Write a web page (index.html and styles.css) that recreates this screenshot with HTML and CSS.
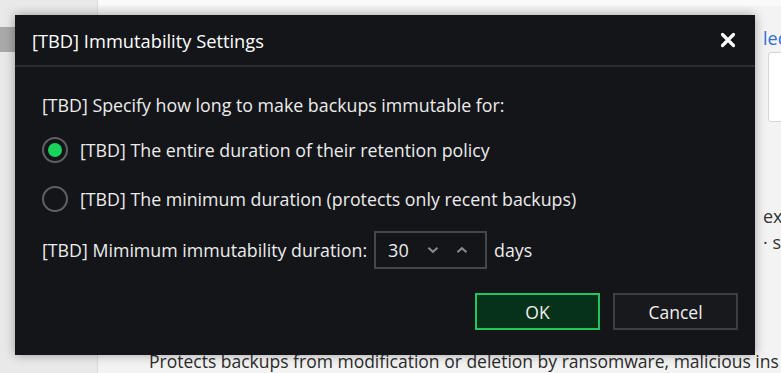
FILE: index.html
```html
<!DOCTYPE html>
<html lang="en">
<head>
    <meta charset="UTF-8">
    <title>Immutability Settings</title>
    <link rel="stylesheet" href="styles.css">
</head>
<body>
    <div class="page">
        <div class="sidebar">
            <div class="nav-item"></div>
        </div>
        <div class="main">
            <div class="main-top"></div>
            <div class="side-bits">
                <span class="link">led</span>
                <div class="field"></div>
                <span class="hint hint-1">exc</span>
                <span class="hint hint-2">· st</span>
            </div>
            <p class="desc">Protects backups from modification or deletion by ransomware, malicious ins</p>
        </div>
    </div>

    <div class="dialog">
        <div class="dialog-title">
            <span>[TBD] Immutability Settings</span>
            <svg class="close" width="16" height="16" viewBox="0 0 16 16">
                <path d="M2.5 2.5 L13.5 13.5 M13.5 2.5 L2.5 13.5" stroke="#fff" stroke-width="3.2" stroke-linecap="round"/>
            </svg>
        </div>
        <div class="dialog-body">
            <p class="intro">[TBD] Specify how long to make backups immutable for:</p>
            <label class="radio-row">
                <span class="radio checked"></span>
                <span>[TBD] The entire duration of their retention policy</span>
            </label>
            <label class="radio-row">
                <span class="radio"></span>
                <span>[TBD] The minimum duration (protects only recent backups)</span>
            </label>
            <div class="duration-row">
                <span>[TBD] Mimimum immutability duration:</span>
                <div class="spinbox">
                    <span class="spin-value">30</span>
                    <svg class="chevron" width="13" height="8" viewBox="0 0 13 8">
                        <path d="M1.5 1.5 L6.5 6 L11.5 1.5" fill="none" stroke="#8a8a8e" stroke-width="2.2"/>
                    </svg>
                    <svg class="chevron" width="13" height="8" viewBox="0 0 13 8">
                        <path d="M1.5 6.5 L6.5 2 L11.5 6.5" fill="none" stroke="#8a8a8e" stroke-width="2.2"/>
                    </svg>
                </div>
                <span>days</span>
            </div>
            <div class="actions">
                <button class="btn btn-ok">OK</button>
                <button class="btn btn-cancel">Cancel</button>
            </div>
        </div>
    </div>
</body>
</html>
```

FILE: styles.css
```css
body {
    margin: 0;
    font-family: "Open Sans", "Noto Sans", sans-serif;
    background-color: #ececec;
    overflow: hidden;
}
.page {
    display: flex;
    height: 373px;
}
.sidebar {
    width: 97px;
    background-color: #e9e9e9;
    border-right: 1px solid #dcdcdc;
    padding-top: 27px;
}
.nav-item {
    width: 16px;
    height: 25px;
    background-color: #a9a9a9;
}
.main {
    flex: 1;
    background-color: #f3f3f3;
    position: relative;
    overflow: hidden;
}
.main-top {
    height: 6px;
    background-color: #fafafa;
}
.side-bits {
    position: absolute;
    left: 662px;
    top: 0;
    width: 21px;
    height: 300px;
    overflow: hidden;
}
.link {
    position: absolute;
    top: 26px;
    left: 3px;
    color: #2f6fd6;
    font-size: 18px;
}
.field {
    position: absolute;
    top: 52px;
    left: 8px;
    width: 40px;
    height: 68px;
    background-color: #fff;
    border: 1px solid #d6d6d6;
    border-radius: 3px;
}
.hint {
    position: absolute;
    left: 3px;
    color: #333;
    font-size: 18px;
    white-space: nowrap;
}
.hint-1 { top: 204px; }
.hint-2 { top: 230px; }
.desc {
    position: absolute;
    left: 51px;
    top: 349px;
    margin: 0;
    white-space: nowrap;
    color: #2b2b2b;
    font-size: 17.5px;
}
.dialog {
    position: absolute;
    left: 15px;
    top: 15px;
    width: 740px;
    height: 340px;
    background-color: #141519;
    color: #ececec;
    box-shadow: 0 0 10px rgba(0, 0, 0, 0.35);
    display: flex;
    flex-direction: column;
}
.dialog-title {
    height: 50px;
    border-bottom: 2px solid #2b2c30;
    display: flex;
    align-items: center;
    justify-content: space-between;
    padding: 0 19px 0 17px;
    font-size: 18.3px;
    color: #fff;
}
.dialog-body {
    padding: 26px 17px 0 27px;
    font-size: 17.8px;
    line-height: 24px;
    display: flex;
    flex-direction: column;
}
.intro {
    margin: 0 0 8px 0;
}
.radio-row {
    display: flex;
    align-items: center;
    gap: 12px;
    height: 49px;
}
.radio {
    width: 22px;
    height: 22px;
    border: 2px solid #5f6064;
    border-radius: 50%;
    display: flex;
    align-items: center;
    justify-content: center;
}
.radio.checked::after {
    content: '';
    width: 14px;
    height: 14px;
    border-radius: 50%;
    background-color: #1ad35c;
}
.duration-row {
    display: flex;
    align-items: center;
    gap: 7px;
    margin-top: 8px;
}
.spinbox {
    height: 34px;
    width: 97px;
    border: 2px solid #46474b;
    display: flex;
    align-items: center;
    padding-left: 12px;
}
.spin-value {
    width: 43px;
    font-size: 18px;
}
.chevron {
    margin-right: 17px;
}
.actions {
    display: flex;
    justify-content: flex-end;
    gap: 13px;
    margin-top: 24px;
}
.btn {
    width: 125px;
    height: 37px;
    font-family: inherit;
    font-size: 17.5px;
    color: #f0f0f0;
}
.btn-ok {
    background-color: #06321a;
    border: 2px solid #22c55a;
}
.btn-cancel {
    background-color: #18191d;
    border: 2px solid #3d3e42;
}
```
